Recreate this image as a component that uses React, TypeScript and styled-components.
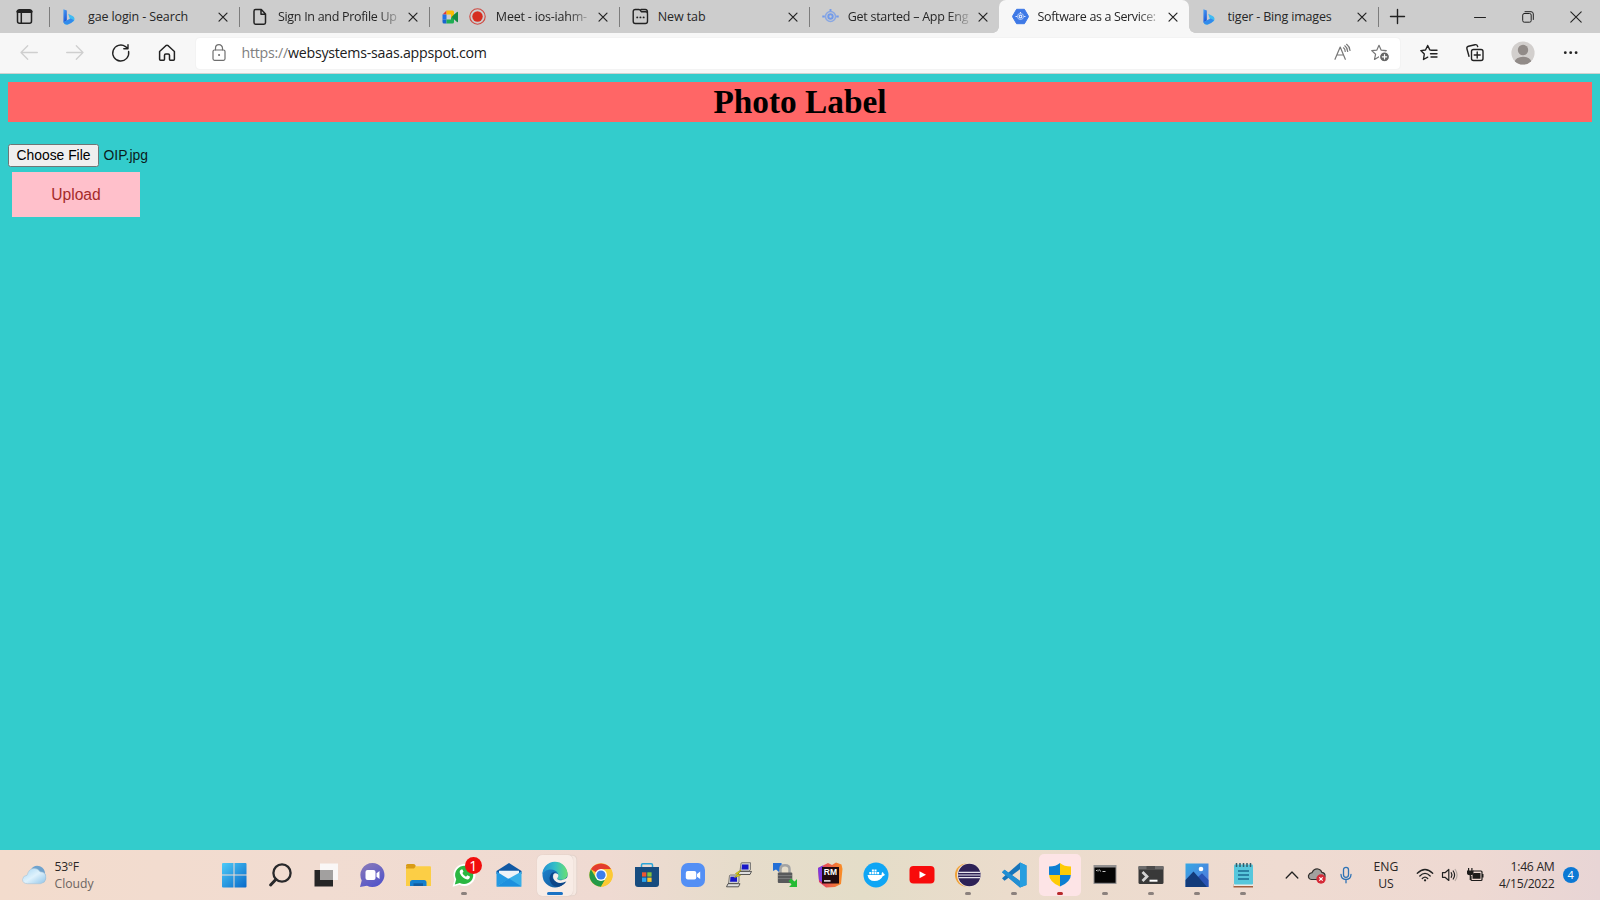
import React from 'react';
import styled, { createGlobalStyle, css } from 'styled-components';

const GlobalStyle = createGlobalStyle`
  * { box-sizing: border-box; }
  body { margin: 0; overflow: hidden; font-family: 'Open Sans', 'Noto Sans', sans-serif; }
  button { font: inherit; border: 0; padding: 0; background: none; }
  svg { display: block; flex: none; }
`;

const Screen = styled.div`
  width: 1600px;
  height: 900px;
  display: flex;
  flex-direction: column;
  overflow: hidden;
`;

/* Tab strip */
const TabStrip = styled.div`
  height: 33px;
  flex: none;
  display: flex;
  background: #cdcdcd;
`;
const TabActions = styled.div`
  width: 49px;
  display: flex;
  align-items: center;
  justify-content: center;
`;
const Tabs = styled.div`
  width: 1329.5px;
  display: flex;
`;
const separator = css`
  content: '';
  position: absolute;
  left: 0;
  top: 7px;
  width: 1px;
  height: 20px;
  background: #7d7d7d;
`;
const Tab = styled.div<{ $active?: boolean; $line?: boolean }>`
  flex: 1;
  min-width: 0;
  display: flex;
  align-items: center;
  padding: 0 4px 0 13px;
  position: relative;
  ${p => p.$line && css`&::before { ${separator} }`}
  ${p => p.$active && css`
    background: #f7f7f7;
    border-radius: 7px 7px 0 0;
    &::before, &::after {
      content: '';
      position: absolute;
      bottom: 0;
      width: 6px;
      height: 6px;
    }
    &::before { left: -6px; background: radial-gradient(circle at 0 0, transparent 5.5px, #f7f7f7 6px); }
    &::after { right: -6px; background: radial-gradient(circle at 100% 0, transparent 5.5px, #f7f7f7 6px); }
  `}
`;
const Favicons = styled.div<{ $wide?: boolean }>`
  width: ${p => (p.$wide ? 54 : 26)}px;
  flex: none;
  display: flex;
  align-items: center;
  gap: 10px;
`;
const TabTitle = styled.span<{ $fade?: boolean; $track: number }>`
  flex: 1;
  min-width: 0;
  overflow: hidden;
  white-space: nowrap;
  font-size: 12.5px;
  line-height: 20px;
  letter-spacing: ${p => p.$track}px;
  color: #262626;
  ${p => p.$fade && css`mask-image: linear-gradient(90deg, #000 calc(100% - 22px), rgba(0, 0, 0, 0.15) 100%);`}
`;
const CloseButton = styled.button`
  width: 24px;
  height: 20px;
  margin-left: 1px;
  flex: none;
  display: flex;
  align-items: center;
  justify-content: center;
`;
const NewTab = styled.button`
  position: relative;
  width: 38px;
  display: flex;
  align-items: center;
  justify-content: center;
  &::before { ${separator} left: -0.5px; }
`;
const WindowControls = styled.div`
  margin-left: auto;
  width: 144px;
  display: grid;
  grid-template-columns: repeat(3, 1fr);
  align-items: center;
  justify-items: center;
`;

/* Toolbar */
const Toolbar = styled.div`
  height: 41px;
  flex: none;
  display: flex;
  align-items: center;
  padding-left: 6px;
  background: #f7f7f7;
  border-bottom: 1px solid #cfd2d0;
`;
const ToolButton = styled.button<{ $w?: number }>`
  width: ${p => p.$w ?? 46}px;
  height: 36px;
  flex: none;
  display: flex;
  align-items: center;
  justify-content: center;
`;
const AddressBar = styled.div`
  width: 1204px;
  height: 31px;
  margin: 0 6px 0 6px;
  padding: 0 1px 0 12px;
  display: flex;
  align-items: center;
  background: #fff;
  border-radius: 4px;
  box-shadow: 0 0 2px rgba(0, 0, 0, 0.07);
`;
const Url = styled.div`
  flex: 1;
  margin-left: 11.5px;
  font-size: 14.2px;
  letter-spacing: -0.24px;
  line-height: 22px;
  color: #202020;
  span { color: #808080; }
`;

/* Web page */
const Page = styled.main`
  flex: 1;
  min-height: 0;
  padding: 8px 8px 0;
  background: #33cccc;
`;
const Banner = styled.h1`
  margin: 0;
  height: 39.5px;
  background: #ff6666;
  color: #000;
  font: bold 33.33px/40px 'Liberation Serif', serif;
  text-align: center;
`;
const FileRow = styled.div`
  display: flex;
  align-items: center;
  gap: 4.5px;
  margin-top: 22.5px;
  font: 13.89px/22px 'Liberation Sans', sans-serif;
  color: #0b1c1c;
`;
const ChooseFile = styled.button`
  width: 91px;
  height: 22.5px;
  border: 1px solid #6f7676;
  border-radius: 2.5px;
  background: #efefef;
  color: #000;
  line-height: 20px;
  white-space: nowrap;
`;
const Upload = styled.button`
  display: block;
  width: 128px;
  height: 45px;
  margin: 5.5px 0 0 4px;
  background: #ffc0cb;
  color: #a52a2a;
  font: 15.63px/44px 'Liberation Sans', sans-serif;
`;

/* Taskbar */
const Taskbar = styled.footer`
  height: 50px;
  flex: none;
  display: flex;
  align-items: center;
  background: linear-gradient(90deg, #f3dccd 0%, #f1dcd1 20%, #efdad2 38%, #e6dccb 46%, #e4ddc8 54%, #ebdccc 63%, #efdbd1 80%, #eed9d2 92%, #e8d5d5 100%);
`;
const Weather = styled.div`
  width: 211.5px;
  padding-left: 21px;
  display: flex;
  align-items: center;
  gap: 7.5px;
`;
const WeatherText = styled.div`
  font-size: 12.2px;
  line-height: 17px;
  letter-spacing: -0.3px;
  color: #2a2624;
  div + div { color: #6c6461; letter-spacing: 0; }
`;
const Apps = styled.div`
  width: 1054.5px;
  height: 50px;
  display: flex;
`;
const AppSlot = styled.div`
  flex: 1;
  display: flex;
  align-items: center;
  justify-content: center;
  position: relative;
`;
const Tile = styled.div<{ $tone: 'light' | 'alert' }>`
  width: ${p => (p.$tone === 'light' ? 36 : 42)}px;
  height: ${p => (p.$tone === 'light' ? 41 : 42)}px;
  flex: none;
  border-radius: 5px;
  display: flex;
  align-items: center;
  justify-content: center;
  background: ${p => (p.$tone === 'light' ? '#f8ece6' : '#fde4e6')};
  box-shadow: ${p => (p.$tone === 'light' ? '0 0 1px #cbbcb4, 4px 0 0 -0.5px #f5e8e1, 4px 0 1px #d8c9c1' : 'none')};
`;
const Indicator = styled.i<{ $w?: number; $color?: string }>`
  position: absolute;
  bottom: 5px;
  left: 50%;
  width: ${p => p.$w ?? 6}px;
  height: 3.4px;
  border-radius: 2px;
  transform: translateX(-50%);
  background: ${p => p.$color ?? '#8b817d'};
`;
const Badge = styled.span`
  position: absolute;
  left: 24px;
  top: 7px;
  width: 17px;
  height: 17px;
  border-radius: 50%;
  background: #f10d0d;
  color: #fff;
  font-size: 14px;
  line-height: 17px;
  text-align: center;
`;
const Tray = styled.div`
  flex: 1;
  display: flex;
  align-items: center;
  padding-left: 15px;
  color: #292524;
  font-size: 12.2px;
  line-height: 17px;
`;
const TrayItem = styled.div<{ $w: number }>`
  width: ${p => p.$w}px;
  flex: none;
  display: flex;
  justify-content: center;
  text-align: center;
`;
const Clock = styled.div`
  width: 65.5px;
  flex: none;
  text-align: right;
  white-space: nowrap;
  letter-spacing: -0.28px;
  div + div { letter-spacing: -0.25px; }
`;
const Notice = styled.div`
  width: 16.5px;
  height: 16.5px;
  margin-left: 8px;
  border-radius: 50%;
  background: #0b78d4;
  color: #fff;
  font-size: 11px;
  line-height: 16.5px;
  text-align: center;
`;

type DrawProps = { w?: number; h?: number; stroke?: string; sw?: number; children: React.ReactNode };
const Line = ({ w = 20, h = 20, stroke = '#222', sw = 1.3, children }: DrawProps) => (
  <svg width={w} height={h} viewBox={`0 0 ${w} ${h}`} fill="none" stroke={stroke} strokeWidth={sw} strokeLinecap="round" strokeLinejoin="round">{children}</svg>
);
const Pic = ({ w = 30, h = 30, children }: DrawProps) => (
  <svg width={w} height={h} viewBox={`0 0 ${w} ${h}`}>{children}</svg>
);

const Cross = () => <Line w={12} h={12} sw={1.2}><path d="M2 2.2 10 10.2M10 2.2 2 10.2" /></Line>;
const Bing = () => (
  <Pic w={16} h={18}>
    <defs><linearGradient id="bing" x1="0" y1="0" x2=".5" y2="1"><stop offset="0" stopColor="#4aa3f5" /><stop offset="1" stopColor="#1c56d8" /></linearGradient>
      <linearGradient id="bing2" x1="1" y1="0" x2="0" y2="1"><stop offset="0" stopColor="#3fb6f2" /><stop offset="1" stopColor="#46c8f0" /></linearGradient></defs>
    <path d="M1.4 1.2 4.8 2.6v9.8L1.4 14.6z" fill="url(#bing)" />
    <path d="M6.2 5.7 10.6 8a3.4 3.4 0 0 1 .8 5.600L5.9 16.600Q3 17.400 1.400 14.600L7.800 11.100z" fill="url(#bing2)" />
    <path d="M1.400 14.300 4.800 12.200 8.800 10.600 12 12.200Q10 15.200 5.800 16.400 2.600 17.200 1.400 14.300z" fill="#2b78ea" opacity=".75" />
  </Pic>
);
const Doc = () => <Line w={16} h={18} sw={1.5}><path d="M3.500 1.600H9.300L13.500 6V14.600Q13.500 16.200 12 16.200H3.500Q2 16.200 2 14.600V3.200Q2 1.600 3.500 1.600zM9 1.800V6.200H13.400" /></Line>;
const Meet = () => (
  <Pic w={17} h={16}>
    <path d="M.5 5.500 4.500 1.500V5.500z" fill="#e53935" /><path d="M.5 5.500H4.500V10.500H.5z" fill="#2171e8" />
    <path d="M.5 10.500H4.500V14.500H2Q.5 14.500.5 13z" fill="#1765cf" /><path d="M4.500 1.500H10.500Q12 1.500 12 3V8L9 10V5.500H4.500z" fill="#fbbc04" />
    <path d="M4.500 10.500H9V8.500L12 8V13Q12 14.500 10.500 14.500H4.500z" fill="#1eae53" /><path d="M12 5.500 15 3Q16 2.400 16 3.500V12.500Q16 13.600 15 13L9.500 8z" fill="#158a43" />
  </Pic>
);
const Record = () => <Pic w={17} h={17}><circle cx="8.500" cy="8.500" r="7.700" fill="none" stroke="#cf4a42" strokeWidth="1.100" /><circle cx="8.500" cy="8.500" r="5.200" fill="#d62d20" /></Pic>;
const NewTabIcon = () => <Line w={17} h={17} sw={1.400}><path d="M3.300 1.500H7Q8.300 1.500 9.300 3.800H13.500Q15.500 3.800 15.500 5.800V13.300Q15.500 15.500 13.300 15.500H3.300Q1.200 15.500 1.200 13.300V3.600Q1.200 1.500 3.300 1.500zM9 1.500H13.300Q15.500 1.500 15.500 4.500" /><path d="M5.200 9.400h.1M8.400 9.400h.1M11.600 9.400h.1" strokeWidth="1.900" /></Line>;
const Engine = ({ color = '#739bea' }: { color?: string }) => (
  <g fill="none" stroke={color}><circle cx="8.500" cy="8.500" r="5" strokeWidth="1.500" opacity=".75" /><circle cx="8.500" cy="8.500" r="2.200" strokeWidth="2" />
    <path d="M.3 8.500H2.800M14.200 8.500H16.700M8.500 1V3.300" strokeWidth="1.900" /></g>
);
const GcpIcon = () => <Pic w={17} h={17}><Engine /></Pic>;
const GcpHex = () => <Pic w={17} h={17}><path d="M4.600 1.300H12.400L16.600 8.500 12.400 15.700H4.600L.4 8.500z" fill="#3e79e6" stroke="#3e79e6" strokeLinejoin="round" /><g transform="translate(3.300 3.300) scale(.61)"><Engine color="#dbe7ff" /></g></Pic>;

type TabInfo = { title: string; icon: React.ReactNode; fade?: boolean; active?: boolean; wide?: boolean; line?: boolean; track: number };
const tabs: TabInfo[] = [
  { title: 'gae login - Search', icon: <Bing />, line: true, track: -0.13 },
  { title: 'Sign In and Profile Up', icon: <Doc />, fade: true, line: true, track: -0.3 },
  { title: 'Meet - ios-iahm-', icon: <><Meet /><Record /></>, fade: true, wide: true, line: true, track: -0.2 },
  { title: 'New tab', icon: <NewTabIcon />, line: true, track: -0.1 },
  { title: 'Get started – App Eng', icon: <GcpIcon />, fade: true, line: true, track: -0.26 },
  { title: 'Software as a Service:', icon: <GcpHex />, fade: true, active: true, track: -0.36 },
  { title: 'tiger - Bing images', icon: <Bing />, track: -0.18 },
];

const Windows = () => (
  <Pic><defs><linearGradient id="win" x1="0" y1="0" x2="1" y2="1"><stop offset="0" stopColor="#4ecbf8" /><stop offset="1" stopColor="#0869c9" /></linearGradient></defs>
    <path fill="url(#win)" d="M4 3H14.500V14.500H3V4Q3 3 4 3zM15.500 3H26.500Q27.500 3 27.500 4V14.500H15.500zM3 15.500H14.500V27.500H4Q3 27.500 3 26.500zM15.500 15.500H27.500V26.500Q27.500 27.500 26.500 27.500H15.500z" /></Pic>
);
const SearchIcon = () => <Pic><g fill="none" stroke="#29292b" strokeLinecap="round"><circle cx="17" cy="13" r="8.600" strokeWidth="2.300" /><path d="M10.800 19.400 5.600 25" strokeWidth="3" /></g></Pic>;
const TaskView = () => <Pic><path d="M3.500 10H22V26.500H3.500z" fill="#262626" /><path d="M9 3.500H27V20H9z" fill="#fbf9f8" opacity=".92" /><path d="M9 10H22V20H9z" fill="#a2a09f" /></Pic>;
const Chat = () => (
  <Pic><defs><linearGradient id="chat" x1="0" y1="0" x2=".6" y2="1"><stop offset="0" stopColor="#8c7cb8" /><stop offset="1" stopColor="#5455c9" /></linearGradient></defs>
    <path d="M15.500 3a12 12 0 1 1-5.500 22.700L3 27 4.700 20.500A12 12 0 0 1 15.500 3z" fill="url(#chat)" /><rect x="8.500" y="10" width="10" height="10" rx="2" fill="#fff" /><path d="M19.500 13.300 22.500 11V19L19.500 16.800z" fill="#fff" /></Pic>
);
const Explorer = () => <Pic><path d="M3 5.500Q3 4 4.500 4H10.500Q12 4 13 6.500H3z" fill="#d89b16" /><path d="M3 6.500V9H13L12 4.500z" fill="#d89b16" /><path d="M3 8.500H11L13 6.200H27Q28 6.200 28 7.500V26H3z" fill="#fcce45" /><path d="M7 26V22.500Q7 20 9.500 20H21Q23.500 20 23.500 22.500V26z" fill="#1580cf" /><path d="M10.500 23.300H20V26H10.500z" fill="#125c9f" /></Pic>;
const WhatsApp = () => <Pic><path d="M3.600 26.800 5.500 19.500A11 11 0 1 1 10.500 24.700z" fill="#fff" /><path d="M5.800 24.500 7.200 19.300A9.100 9.100 0 1 1 10.800 22.900z" fill="#2cb742" /><path d="M12.200 9.500Q10 10.500 11 13.500 13.500 18.600 18.300 19.400 20.900 19.500 20.900 16.600L18.300 15.300 17 16.800Q14.300 15.600 13.400 13L14.500 11.800 13.500 9.500z" fill="#fff" /></Pic>;
const Mail = () => <Pic><path d="M2.500 11 15 3 27.500 11V14H2.500z" fill="#1158a3" /><path d="M5 10.800H25V18L15 21 5 18z" fill="#edf3f8" /><path d="M2.500 11.500 15 19.300 2.500 26.500z" fill="#2499e2" /><path d="M27.500 11.500V26.500H2.500L15 18.500z" fill="#38afe8" /><path d="M15 18.500 27.500 26.500H2.500z" fill="#1d90de" /></Pic>;
const Edge = () => (
  <Pic><defs><linearGradient id="edgeTop" x1="0" y1=".4" x2="1" y2=".4"><stop offset="0" stopColor="#238fd5" /><stop offset=".5" stopColor="#33bec7" /><stop offset="1" stopColor="#68df72" /></linearGradient>
    <linearGradient id="edgeBody" x1="0" y1="0" x2="1" y2="1"><stop offset="0" stopColor="#2088d4" /><stop offset="1" stopColor="#105394" /></linearGradient></defs>
    <circle cx="15" cy="15" r="12.500" fill="url(#edgeBody)" />
    <path d="M2.500 14.500A12.500 12.500 0 0 1 27.500 14C27.500 18 24.500 20 20.500 19.800 17 19.700 16.700 18.500 18 17.300 19.500 14.500 17 9.800 11 9.500 7 9.300 3.500 11.500 2.500 14.500z" fill="url(#edgeTop)" />
    <path d="M11.800 13Q7.500 17.500 11.300 23.500 15 28.400 21 26 25 24 26.500 21.300 21 24.200 16.500 22 11.300 19 13 14.500 14 12.600 16 12.800 14 11.800 11.800 13z" fill="#0d4688" />
    <path d="M18 17.300Q16.300 19 18.300 19.700 23.500 21.500 28 17V21L26.500 21.300Q20.500 24.200 16.500 22 11.500 18.500 13.500 14.300 15 12 18 14.300 19 16 18 17.300z" fill="#f7efea" /></Pic>
);
const Chrome = () => <Pic><circle cx="15" cy="15" r="11.700" fill="#fcc934" /><path d="M15 15 4.900 9.200A11.700 11.700 0 0 1 25.100 9.200H15z" fill="#e33b2e" /><path d="M4.900 9.200A11.700 11.700 0 0 0 15 26.700L20.100 17.900 10 17.800z" fill="#249a48" /><path d="M15 9.200H25.100A11.700 11.700 0 0 1 15 26.700L20.100 17.900z" fill="#fcc934" /><circle cx="15" cy="15" r="5.900" fill="#fff" /><circle cx="15" cy="15" r="4.600" fill="#3b7ded" /></Pic>;
const Store = () => <Pic><path d="M9.500 8V5Q9.500 3.800 10.700 3.800H19.300Q20.500 3.800 20.500 5V8" fill="none" stroke="#2ba5d8" strokeWidth="1.500" /><path d="M3 7H27V24Q27 27 24 27H6Q3 27 3 24z" fill="#174c7f" /><path d="M10 12.300h4.300v4.300H10z" fill="#ef5632" /><path d="M15.300 12.300h4.300v4.300h-4.300z" fill="#83c43e" /><path d="M10 17.600h4.300v4.300H10z" fill="#2ba5ef" /><path d="M15.300 17.600h4.300v4.300h-4.300z" fill="#fbc52c" /></Pic>;
const Zoom = () => <Pic><rect x="3" y="3" width="24" height="24" rx="7" fill="#538ff5" /><rect x="7.800" y="11" width="10.500" height="8.500" rx="2" fill="#fff" /><path d="M19 14 22.200 11.500V19L19 16.700z" fill="#fff" /></Pic>;
const Computer = ({ x, y }: { x: number; y: number }) => <g transform={`translate(${x} ${y})`}><path d="M3 .5 4 0H12.500V7L10.800 8.500H2z" fill="#cfcfcf" stroke="#555" strokeWidth=".7" /><path d="M4 1.800H10.500V6.700H3.600z" fill="#1616c9" /><path d="M1.500 8.700H13.500L12 11.800H0z" fill="#dedede" stroke="#333" strokeWidth=".8" /></g>;
const Putty = () => <Pic><Computer x={14} y={2.700} /><Computer x={2.500} y={15} /><path d="M17 10 11.500 13.500 14 14.500 10.500 17.500 16.500 15.300 13.700 14z" fill="#f6e90b" stroke="#a59d0c" strokeWidth=".7" /></Pic>;
const WinScp = () => <Pic><path d="M3 3H11.500L12 7.500 9 12 6 9.500 3 11z" fill="#246fd6" /><path d="M10.500 14V9Q10.500 5.200 15 5.200T19.500 9V14" fill="none" stroke="#a4a4a4" strokeWidth="2.500" /><rect x="7.800" y="12.500" width="14.500" height="10.500" rx="1" fill="#58595b" /><path d="M8 15.500H22M8 18.500H22" stroke="#77787a" /><path d="M18.500 21 21 18.500 24.500 21.500 27 19V27H19L21.500 24.500z" fill="#25bb34" /></Pic>;
const RubyMine = () => (
  <Pic><defs><linearGradient id="rm"><stop offset="0" stopColor="#dd366c" /><stop offset="1" stopColor="#fa8f24" /></linearGradient></defs><path d="M3 8 13 3 17 5 21 2.500 26.500 4.500 27.500 9 26 24 20 27 11 27.500 4 22z" fill="url(#rm)" /><path d="M3 8 8 5.500V23L4 20z" fill="#7b3ce0" /><path d="M7 7H24V23.500H7z" fill="#21090f" />
    <text x="8.800" y="14.800" fill="#fff" fontFamily="Liberation Sans, sans-serif" fontWeight="700" fontSize="8.500">RM</text><path d="M9 20.200H15.500V21.600H9z" fill="#fff" /></Pic>
);
const Docker = () => <Pic><circle cx="15" cy="15" r="12.500" fill="#0fa6f5" /><path d="M6.500 15H20.500Q20.500 12.700 21.500 12 22.800 12.800 22.900 14.200L24.200 14.600Q23.500 16 21.700 16.200 19.500 21 13.500 21 7.500 21 6.500 15z" fill="#fff" /><path d="M8.300 12H10.300V14.200H8.300zM10.900 12H12.900V14.200H10.900zM13.500 12H15.500V14.200H13.500zM16.100 12H18.100V14.200H16.100zM10.900 9.500H12.900V11.500H10.900zM13.500 9.500H15.500V11.500H13.500z" fill="#fff" /></Pic>;
const YouTube = () => <Pic><rect x="2.500" y="6" width="25" height="17.500" rx="4" fill="#f80b0b" /><path d="M12.500 11.200 19 14.700 12.500 18.200z" fill="#fff" /></Pic>;
const Eclipse = () => <Pic><circle cx="13.500" cy="15" r="11.500" fill="#f0a238" /><circle cx="16" cy="15" r="12" fill="#f1e5dc" /><circle cx="16.300" cy="15" r="11.300" fill="#2d2156" /><path d="M5.500 12.400H27.300M5 15H27.600M5.500 17.600H27.300" stroke="#e8e5ef" strokeWidth="1.200" /></Pic>;
const Code = () => <Pic><path d="M21 2.500 27.500 5.500V25L21 27.500 3 12.200 5.500 9.700 21 21z" fill="#1a79c3" /><path d="M21 2.500 27.500 5.500V25L21 27.500z" fill="#259ee0" /><path d="M3 18.200 21 2.500V9.300L5.500 20.800z" fill="#1674ba" /><path d="M3 12.200 5.500 9.700 21 21V27.500z" fill="#218fd3" /></Pic>;
const Shield = () => <Pic><defs><clipPath id="shield"><path d="M15 3Q19 6.500 26 6.500V14Q26 22 15 26.500 4 22 4 14V6.500Q11 6.500 15 3z" /></clipPath></defs><g clipPath="url(#shield)"><path d="M4 3H15V15H4zM15 15H26V27H15z" fill="#0d7fd2" /><path d="M15 3H26V15H15zM4 15H15V27H4z" fill="#fecb05" /></g></Pic>;
const Cmd = () => <Pic><path d="M3.500 5H26.500V24H3.500z" fill="#929090" /><path d="M4.500 7.500H25.500V22.800H4.500z" fill="#050505" /><path d="M6 10.500h1M8 9.500v2M9.500 9.500l1 2M12.500 11.500h3" stroke="#ddd" strokeWidth=".9" /></Pic>;
const Terminal = () => <Pic><rect x="2.500" y="6" width="25" height="18" rx="1.500" fill="#393939" /><path d="M2.500 6H27.500V9.500H2.500z" fill="#6d6c6c" /><path d="M10.500 6H19V9.500H10.500z" fill="#4c4b4b" /><path d="M6.500 12 11 16.500 6.500 21" fill="none" stroke="#d3d3d3" strokeWidth="2.700" /><path d="M13.500 19.700H21.500V21.700H13.500z" fill="#fff" /></Pic>;
const Photos = () => (
  <Pic><defs><linearGradient id="photos" x1="0" y1="0" x2="1" y2="1"><stop offset="0" stopColor="#36a8e4" /><stop offset="1" stopColor="#5374dc" /></linearGradient></defs><path d="M3.500 3.500H26.500V27H3.500z" fill="url(#photos)" /><path d="M15.500 17.500 20 13.300 26.500 20V27H16z" fill="#2954b5" /><path d="M3.500 20 11.500 11.500 25 27H3.500z" fill="#133b7a" /><circle cx="19" cy="9" r="2.300" fill="#fff" /></Pic>
);
const Notepad = () => <Pic><path d="M5.500 24H25V27.500H5.500z" fill="#a45f3e" /><path d="M5.500 24H25V26H5.500z" fill="#eceae6" /><rect x="6" y="4.500" width="19" height="20" rx="1" fill="#57c7dc" /><path d="M10 11H21M10 15H21M10 19H21" stroke="#1b6c91" strokeWidth="1.500" /><path d="M8.500 3V7M12 3V7M15.500 3V7M19 3V7M22.500 3V7" stroke="#315d6c" strokeWidth="1.500" /></Pic>;

type AppInfo = { name: string; icon: React.ReactNode; running?: boolean; tile?: 'light' | 'alert'; badge?: string };
const apps: AppInfo[] = [
  { name: 'start', icon: <Windows /> }, { name: 'search', icon: <SearchIcon /> }, { name: 'views', icon: <TaskView /> },
  { name: 'chat', icon: <Chat /> }, { name: 'explorer', icon: <Explorer /> }, { name: 'whatsapp', icon: <WhatsApp />, running: true, badge: '1' },
  { name: 'mail', icon: <Mail /> }, { name: 'edge', icon: <Edge />, tile: 'light' }, { name: 'chrome', icon: <Chrome /> },
  { name: 'store', icon: <Store /> }, { name: 'zoom', icon: <Zoom /> }, { name: 'putty', icon: <Putty /> }, { name: 'winscp', icon: <WinScp /> },
  { name: 'rubymine', icon: <RubyMine /> }, { name: 'docker', icon: <Docker /> }, { name: 'youtube', icon: <YouTube /> },
  { name: 'eclipse', icon: <Eclipse />, running: true }, { name: 'code', icon: <Code />, running: true }, { name: 'shield', icon: <Shield />, tile: 'alert' },
  { name: 'cmd', icon: <Cmd />, running: true }, { name: 'terminal', icon: <Terminal />, running: true }, { name: 'photos', icon: <Photos />, running: true },
  { name: 'notepad', icon: <Notepad />, running: true },
];

const starPath = 'M9 2.300 11.100 7.100 16.300 7.600 12.400 11.200 13.500 16.400 9 13.700 4.500 16.400 5.600 11.200 1.700 7.600 6.900 7.100z';

export default function App() {
  return (
    <Screen>
      <GlobalStyle />
      <TabStrip>
        <TabActions>
          <Line w={17} h={17} sw={1.500}><rect x="1.500" y="1.800" width="14" height="13.400" rx="2" /><path d="M2 3.500H15" strokeWidth="3.200" /><path d="M5.300 4V15" /></Line>
        </TabActions>
        <Tabs>
          {tabs.map(t => (
            <Tab key={t.title} $active={t.active} $line={t.line}>
              <Favicons $wide={t.wide}>{t.icon}</Favicons>
              <TabTitle $fade={t.fade} $track={t.track}>{t.title}</TabTitle>
              <CloseButton><Cross /></CloseButton>
            </Tab>
          ))}
        </Tabs>
        <NewTab><Line w={17} h={17} sw={1.400}><path d="M8.500 1.500V15.500M1.500 8.500H15.500" /></Line></NewTab>
        <WindowControls>
          <Line w={12} h={12} sw={1}><path d="M.5 6.500H11.500" /></Line>
          <Line w={12} h={12} sw={1}><rect x=".7" y="2.500" width="8.500" height="8.700" rx="1.600" /><path d="M3 .7H9Q11.300.7 11.300 3V8.500" /></Line>
          <Line w={12} h={12} sw={1.100}><path d="M.8.8 11.200 11.200M11.200.8.8 11.200" /></Line>
        </WindowControls>
      </TabStrip>
      <Toolbar>
        <ToolButton><Line stroke="#cfcfcf"><path d="M18.300 9.500H2M8.700 2.700 2 9.500 8.700 16.300" /></Line></ToolButton>
        <ToolButton><Line stroke="#cfcfcf"><path d="M1.700 9.500H18M11.300 2.700 18 9.500 11.300 16.300" /></Line></ToolButton>
        <ToolButton><Line sw={1.400}><path d="M17.600 8.500A8 8 0 1 1 14.500 3.600L17 5.500M17 1.800V5.800H12.800" /></Line></ToolButton>
        <ToolButton><Line sw={1.500}><path d="M2.600 8.500 8.800 2.700Q10 1.700 11.200 2.700L17.400 8.500V16.300Q17.400 17.200 16.500 17.200H13.300Q12.500 17.200 12.500 16.300V12.200Q12.500 11 11.200 11H8.800Q7.500 11 7.500 12.200V16.300Q7.500 17.200 6.700 17.200H3.500Q2.600 17.200 2.600 16.300z" /></Line></ToolButton>
        <AddressBar>
          <Line w={22} h={20} stroke="#6f6f6f" sw={1.200}><rect x="5" y="7" width="12" height="10.300" rx="1.500" /><path d="M7.500 6.800V5.200A3.500 3.500 0 0 1 14.500 5.200V6.800" /><path d="M11 12.100h.1" strokeWidth="2" /></Line>
          <Url><span>https://</span>websystems-saas.appspot.com</Url>
          <ToolButton $w={38}><Line stroke="#777" sw={1.200}><path d="M3 16.300 8.200 4 13.300 16.300M4.800 12H11.500M11.500 4.800Q13.200 6 13.200 8.400M12.800 2.800Q15.400 4.700 15.700 8.500M14.600 1.300Q17.600 3.500 18 7.500" /></Line></ToolButton>
          <ToolButton $w={38}><Line w={20} stroke="#777" sw={1.200}><path d={starPath} /><circle cx="14.500" cy="13.800" r="5" fill="#666" stroke="#fff" /><path d="M14.500 11.600V16M12.300 13.800H16.700" stroke="#fff" /></Line></ToolButton>
        </AddressBar>
        <ToolButton><Line sw={1.400}><path d="M12.500 7.300 10.800 6.900 8.700 2.500 6.500 7 1.800 7.600 5.300 11 4.500 16.500 8.700 14.200M12 7.300H18M11.500 10.700H18M12 14H18" /></Line></ToolButton>
        <ToolButton $w={46}><Line sw={1.400}><rect x="6.500" y="6.500" width="11.500" height="11" rx="2" /><path d="M12.200 9V15M9.200 12H15.200M4 13.300 1.900 5.800Q1.500 3.800 3.500 3.300L10 1.700Q12 1.300 12.700 3.500" /></Line></ToolButton>
        <ToolButton $w={49}><Pic w={24} h={24}><defs><clipPath id="face"><circle cx="12" cy="12" r="11.600" /></clipPath></defs><circle cx="12" cy="12" r="11.600" fill="#d2cfcd" /><g clipPath="url(#face)" fill="#918b88"><circle cx="12" cy="9" r="5.200" /><ellipse cx="12" cy="21" rx="8.300" ry="5.300" /></g></Pic></ToolButton>
        <ToolButton $w={47}><Pic w={20} h={20}><g fill="#222"><circle cx="4.300" cy="9.700" r="1.400" /><circle cx="9.700" cy="9.700" r="1.400" /><circle cx="15.100" cy="9.700" r="1.400" /></g></Pic></ToolButton>
      </Toolbar>
      <Page>
        <Banner>Photo Label</Banner>
        <FileRow><ChooseFile>Choose File</ChooseFile><span>OIP.jpg</span></FileRow>
        <Upload>Upload</Upload>
      </Page>
      <Taskbar>
        <Weather>
          <Pic w={26} h={24}><defs><linearGradient id="cloud" x1="0" y1="0" x2="1" y2="1"><stop offset="0" stopColor="#a4d5f3" /><stop offset=".5" stopColor="#dff2fc" /><stop offset="1" stopColor="#8fc3e8" /></linearGradient></defs><path d="M10 6.500Q13 1.500 19 3.300 24 5.500 24 10.500 26.500 15 23 19.500L10 14z" fill="#6fa2cd" /><path d="M6.500 20.700Q1.500 20.500 1.500 16.500 2 12.500 6 12.300 8 5 13.500 5.500 17 5.500 19 8.800 25.500 9 24.800 15.500 24 20 19.500 20.700z" fill="url(#cloud)" stroke="#a9c4d6" strokeWidth=".6" /></Pic>
          <WeatherText><div>53°F</div><div>Cloudy</div></WeatherText>
        </Weather>
        <Apps>
          {apps.map(a => (
            <AppSlot key={a.name}>
              {a.tile ? <Tile $tone={a.tile}>{a.icon}</Tile> : a.icon}
              {a.badge && <Badge>{a.badge}</Badge>}
              {a.running && <Indicator />}
              {a.tile === 'light' && <Indicator $w={16} $color="#1a72c4" />}
              {a.tile === 'alert' && <Indicator $color="#b8292b" />}
            </AppSlot>
          ))}
        </Apps>
        <Tray>
          <TrayItem $w={21}><Line w={14} h={10} sw={1.300}><path d="M1.200 8 7 2 12.800 8" /></Line></TrayItem>
          <TrayItem $w={30}><Pic w={20} h={18}><path d="M4.500 13.500Q1 13 1.500 9.500 2.300 7 5 6.700 7 2.500 11 3 14 3.500 14.800 6.300 18.500 7 18 10.500L17 13.500z" fill="#a2a19f" stroke="#34302e" strokeWidth="1.200" /><circle cx="14" cy="13" r="4.700" fill="#d52a37" /><path d="M12.300 11.300 15.700 14.700M15.700 11.300 12.300 14.700" stroke="#fff" strokeWidth="1.200" /></Pic></TrayItem>
          <TrayItem $w={28}><Line w={14} h={18} stroke="#2e72b5" sw={1.300}><rect x="4.500" y="1.300" width="5" height="10" rx="2.500" /><path d="M2 8.500Q2.300 13.500 7 13.500T12 8.500M7 13.700V16.800" /></Line></TrayItem>
          <TrayItem $w={52}>ENG<br />US</TrayItem>
          <TrayItem $w={26}><Line w={18} h={14} sw={1.300}><path d="M1.300 5.300Q9-2.300 16.700 5.300M3.800 8Q9 2.800 14.200 8M6.300 10.500Q9 7.800 11.700 10.500" /><path d="M9 12.300h.1" strokeWidth="2.200" /></Line></TrayItem>
          <TrayItem $w={23}><Line w={18} h={14} sw={1.200}><path d="M1.500 4.700H4L7.800 1.500V12.500L4 9.300H1.500zM10.200 4.700Q11.700 7 10.200 9.300M12.200 3Q15 7 12.200 11" /><path d="M14.200 1.500Q18 7 14.200 12.500" stroke="#b5a8a2" /></Line></TrayItem>
          <TrayItem $w={28}><Pic w={18} h={16}><path d="M7 4H15Q16 4 16 5V12.500Q16 13.500 15 13.500H6Q5 13.500 5 12.500V9" fill="none" stroke="#1d1b1a" strokeWidth="1.200" /><path d="M7.500 6H14.500V11.700H6.500V8z" fill="#1d1b1a" /><path d="M16 7H17.500V10.500H16zM1 3.500H7.500V6.500Q7.500 8 4.900 8.200V13H3.700V8.200Q1 8 1 6.500zM2 1H3.200V4H2zM5.300 1H6.500V4H5.300z" fill="#1d1b1a" /></Pic></TrayItem>
          <Clock><div>1:46 AM</div><div>4/15/2022</div></Clock>
          <Notice>4</Notice>
        </Tray>
      </Taskbar>
    </Screen>
  );
}
